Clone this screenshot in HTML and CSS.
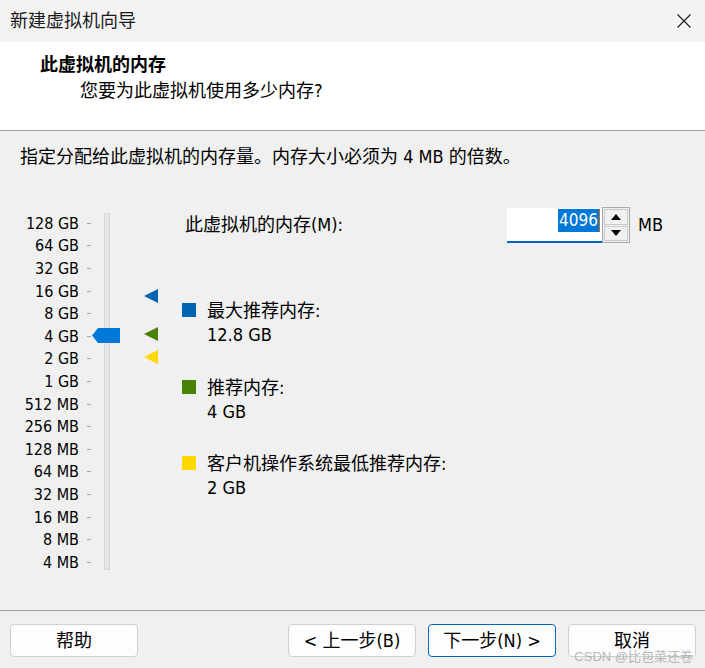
FILE: index.html
```html
<!DOCTYPE html>
<html lang="zh-CN">
<head>
<meta charset="utf-8">
<title>新建虚拟机向导</title>
<link rel="stylesheet" href="styles.css">
</head>
<body>
<div class="window">
  <div class="titlebar">
    <span class="title">新建虚拟机向导</span>
    <svg class="close" width="14" height="14" viewBox="0 0 14 14"><path d="M0.5 0.5L13.5 13.5M13.5 0.5L0.5 13.5" stroke="#1a1a1a" stroke-width="1.1" fill="none"/></svg>
  </div>
  <div class="header">
    <div class="h-title">此虚拟机的内存</div>
    <div class="h-sub">您要为此虚拟机使用多少内存?</div>
  </div>
  <div class="content">
    <p class="intro">指定分配给此虚拟机的内存量。内存大小必须为 4 MB 的倍数。</p>
    <div class="main">
      <div class="slider">
        <ul class="scale">
          <li><span>128 GB</span><i class="tick"></i></li>
          <li><span>64 GB</span><i class="tick"></i></li>
          <li><span>32 GB</span><i class="tick"></i></li>
          <li><span>16 GB</span><i class="tick"></i></li>
          <li><span>8 GB</span><i class="tick"></i></li>
          <li><span>4 GB</span><i class="tick"></i></li>
          <li><span>2 GB</span><i class="tick"></i></li>
          <li><span>1 GB</span><i class="tick"></i></li>
          <li><span>512 MB</span><i class="tick"></i></li>
          <li><span>256 MB</span><i class="tick"></i></li>
          <li><span>128 MB</span><i class="tick"></i></li>
          <li><span>64 MB</span><i class="tick"></i></li>
          <li><span>32 MB</span><i class="tick"></i></li>
          <li><span>16 MB</span><i class="tick"></i></li>
          <li><span>8 MB</span><i class="tick"></i></li>
          <li><span>4 MB</span><i class="tick"></i></li>
        </ul>
        <div class="track"><div class="thumb"></div></div>
        <div class="markers">
          <span class="marker max" style="top:76px"></span>
          <span class="marker rec" style="top:114px"></span>
          <span class="marker min" style="top:137px"></span>
        </div>
      </div>
      <div class="details">
        <div class="mem-row">
          <label class="mem-label">此虚拟机的内存(M):</label>
          <div class="input"><span class="sel">4096</span><span class="caret"></span></div>
          <div class="spin">
            <span class="spin-btn"><svg width="10" height="6" viewBox="0 0 10 6"><path d="M0 6L5 0L10 6Z" fill="#000"/></svg></span>
            <span class="spin-btn"><svg width="10" height="6" viewBox="0 0 10 6"><path d="M0 0L10 0L5 6Z" fill="#000"/></svg></span>
          </div>
          <span class="unit">MB</span>
        </div>
        <div class="legend">
          <div class="item">
            <span class="swatch max"></span>
            <div class="item-text">
              <div>最大推荐内存:</div>
              <div class="value">12.8 GB</div>
            </div>
          </div>
          <div class="item">
            <span class="swatch rec"></span>
            <div class="item-text">
              <div>推荐内存:</div>
              <div class="value">4 GB</div>
            </div>
          </div>
          <div class="item">
            <span class="swatch min"></span>
            <div class="item-text">
              <div>客户机操作系统最低推荐内存:</div>
              <div class="value">2 GB</div>
            </div>
          </div>
        </div>
      </div>
    </div>
  </div>
  <div class="footer">
    <button class="btn">帮助</button>
    <div class="nav">
      <button class="btn">&lt; 上一步(B)</button>
      <button class="btn default">下一步(N) &gt;</button>
      <button class="btn">取消</button>
    </div>
  </div>
  <div class="watermark">CSDN @比包菜还卷</div>
</div>
</body>
</html>
```
FILE: styles.css
```css
* { box-sizing: border-box; }
html, body { margin: 0; padding: 0; }
body {
  font-family: "DejaVu Sans Condensed", "DejaVu Sans", "Noto Sans CJK SC", sans-serif;
  font-stretch: semi-condensed;
  font-size: 18px;
  color: #000;
  background: #f0f0f0;
}
.window {
  position: relative;
  width: 705px;
  height: 668px;
  display: flex;
  flex-direction: column;
  background: #f0f0f0;
  overflow: hidden;
}
.titlebar {
  height: 42px;
  flex: 0 0 42px;
  background: #f3f3f3;
  display: flex;
  align-items: center;
  justify-content: space-between;
  padding: 0 14px 0 10px;
}
.title { line-height: 24px; color: #1a1a1a; }
.close { display: block; margin-top: 0; }
.header {
  flex: 0 0 89px;
  background: #fff;
  border-bottom: 1px solid #a0a0a0;
  padding-top: 11px;
}
.h-title { font-weight: bold; line-height: 24px; padding-left: 40px; }
.h-sub { line-height: 24px; padding-left: 80px; margin-top: 2px; }
.content { flex: 1 1 auto; }
.intro { margin: 0; padding: 14px 0 0 20px; line-height: 24px; }
.main { display: flex; align-items: flex-start; margin-top: 38px; }
.slider { display: flex; align-items: flex-start; margin-top: 5px; }
.scale {
  list-style: none;
  margin: 0;
  padding: 0;
  width: 91px;
}
.scale li {
  display: flex;
  justify-content: flex-end;
  align-items: center;
  height: 22.6px;
  font-size: 16px;
}
.tick {
  display: block;
  width: 4px;
  height: 1px;
  background: #a8a8a8;
  margin-left: 8px;
}
.track {
  position: relative;
  margin: 1px 0 0 13px;
  width: 6px;
  height: 357px;
  background: #e6e6e6;
  border: 1px solid #d6d6d6;
}
.thumb {
  position: absolute;
  left: -13px;
  top: 114px;
  width: 28px;
  height: 15px;
  background: #0078d7;
  clip-path: polygon(0 50%, 6px 0, 100% 0, 100% 100%, 6px 100%);
}
.markers {
  position: relative;
  margin: 1px 0 0 34px;
  width: 14px;
  height: 357px;
}
.marker {
  position: absolute;
  left: 0;
  width: 14px;
  height: 14px;
  clip-path: polygon(0 50%, 100% 0, 100% 100%);
}
.max { background: #0063b1; }
.rec { background: #498205; }
.min { background: #ffd800; }
.details { margin-left: 24px; }
.mem-row { display: flex; align-items: flex-start; height: 36px; }
.mem-label { flex: 0 0 322px; margin-left: 3px; line-height: 36px; }
.input {
  margin-top: 1px;
  width: 95px;
  height: 35px;
  background: #fff;
  border-bottom: 2px solid #0067c0;
  display: flex;
  justify-content: flex-end;
  align-items: flex-start;
  padding: 1px 2px 0 0;
}
.sel {
  font-size: 17px;
  line-height: 23px;
  background: #0078d7;
  color: #fff;
  padding: 0 1px;
}
.caret { width: 1px; height: 23px; background: #c86a1c; }
.spin {
  width: 28px;
  height: 36px;
  border: 1px solid #a9a9a9;
  padding: 1px;
  display: flex;
  flex-direction: column;
  gap: 1px;
  background: #f0f0f0;
}
.spin-btn {
  flex: 1 1 0;
  display: flex;
  align-items: center;
  justify-content: center;
  border: 1px solid #c9c9c9;
  background: #f0f0f0;
}
.spin-btn svg { display: block; }
.unit { margin-left: 8px; line-height: 36px; }
.legend { margin-top: 56px; display: flex; flex-direction: column; gap: 28.5px; }
.item { display: flex; align-items: flex-start; }
.swatch { width: 14px; height: 14px; margin-top: 4px; margin-right: 11px; flex: 0 0 14px; }
.item-text { line-height: 24px; }
.footer {
  flex: 0 0 58px;
  border-top: 1px solid #a0a0a0;
  display: flex;
  justify-content: space-between;
  padding: 13px 9px 11px 10px;
}
.nav { display: flex; gap: 12px; }
.btn {
  width: 128px;
  height: 33px;
  font: inherit;
  font-size: 18px;
  color: #000;
  background: #fdfdfd;
  border: 1px solid #d0d0d0;
  border-radius: 4px;
  padding: 0;
  line-height: 31px;
}
.btn.default { border-color: #0067c0; }
.watermark {
  position: absolute;
  right: 12px;
  bottom: 3px;
  font-size: 13px;
  line-height: 16px;
  color: rgba(160, 160, 160, 0.75);
  font-stretch: normal;
  font-family: "Liberation Sans", "Noto Sans CJK SC", sans-serif;
}
```
